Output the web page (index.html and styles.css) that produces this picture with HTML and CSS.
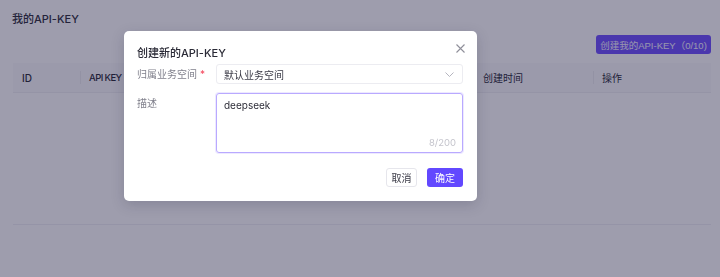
FILE: index.html
```html
<!DOCTYPE html>
<html lang="zh">
<head>
<meta charset="utf-8">
<link rel="stylesheet" href="styles.css">
</head>
<body>
<div class="page">
  <div class="page-title">我的API-KEY</div>
  <div class="toolbar">
    <button class="btn-create">创建我的API-KEY（0/10)</button>
  </div>
  <div class="table">
    <div class="thead">
      <div class="th c-id">ID</div>
      <div class="th c-key">API KEY</div>
      <div class="th c-name"></div>
      <div class="th c-space"></div>
      <div class="th c-time">创建时间</div>
      <div class="th c-op">操作</div>
    </div>
    <div class="tbody"></div>
  </div>
</div>

<div class="mask"></div>

<div class="modal">
  <div class="modal-head">
    <div class="modal-title">创建新的API-KEY</div>
    <svg class="close" width="9" height="9" viewBox="0 0 9 9"><path d="M0.5 0.5 L8.5 8.5 M8.5 0.5 L0.5 8.5" stroke="#8f8f9a" stroke-width="1.1" fill="none"/></svg>
  </div>
  <div class="form-row">
    <div class="label">归属业务空间<span class="req">*</span></div>
    <div class="select">
      <span>默认业务空间</span>
      <svg width="9" height="5" viewBox="0 0 9 5"><path d="M0.5 0.5 L4.5 4.5 L8.5 0.5" stroke="#b5b5bf" stroke-width="1" fill="none"/></svg>
    </div>
  </div>
  <div class="form-row">
    <div class="label label-top">描述</div>
    <div class="textarea">
      <span class="ta-text">deepseek</span>
      <span class="count">8/200</span>
    </div>
  </div>
  <div class="modal-foot">
    <button class="btn btn-cancel">取消</button>
    <button class="btn btn-ok">确定</button>
  </div>
</div>
</body>
</html>
```

FILE: styles.css
```css
* { box-sizing: border-box; }
html, body { margin: 0; padding: 0; }
body {
  width: 720px;
  height: 277px;
  overflow: hidden;
  background: #ffffff;
  font-family: "Inter", "Noto Sans CJK SC", sans-serif;
  font-size: 11px;
  color: #1f1f2b;
}
.page {
  padding: 12px 9px 0 13px;
  display: flex;
  flex-direction: column;
}
.page-title {
  font-size: 11px;
  font-weight: 500;
  line-height: 14px;
  margin-left: -1px;
  color: #2a2a36;
}
.toolbar {
  display: flex;
  justify-content: flex-end;
  margin-top: 9px;
}
.btn-create {
  height: 19px;
  width: 115px;
  border: none;
  border-radius: 3px;
  background: #6c4cff;
  color: #f4f2ff;
  font-family: "Liberation Sans", "Noto Sans CJK SC", sans-serif;
  font-size: 9.5px;
  padding: 0;
  white-space: nowrap;
  overflow: hidden;
}
.table {
  margin-top: 9px;
  height: 162px;
  border-bottom: 1px solid #f0f0f4;
}
.thead {
  display: flex;
  height: 30px;
  background: #fafafc;
  border-bottom: 1px solid #efeff3;
}
.th {
  display: flex;
  align-items: center;
  padding-left: 9px;
  font-size: 10px;
  font-weight: 500;
  color: #262633;
  position: relative;
  white-space: nowrap;
}
.th + .th::before {
  content: "";
  position: absolute;
  left: 0;
  top: 8px;
  bottom: 8px;
  width: 1px;
  background: #ebebf0;
}
.c-id { width: 67px; }
.c-key { width: 130px; font-size: 9.5px; letter-spacing: -0.6px; }
.c-name { width: 130px; }
.c-space { width: 134px; }
.c-time { width: 119px; font-weight: 400; }
.c-op { flex: 1; font-weight: 400; }

.mask {
  position: fixed;
  inset: 0;
  background: rgba(29, 28, 65, 0.43);
}
.modal {
  position: fixed;
  left: 124px;
  top: 31px;
  width: 353px;
  height: 170px;
  background: #ffffff;
  border-radius: 5px;
  box-shadow: 0 4px 14px rgba(20, 20, 50, 0.18);
  padding: 12px 14px 14px 13px;
  display: flex;
  flex-direction: column;
}
.modal-head {
  display: flex;
  justify-content: space-between;
  align-items: flex-start;
  height: 21px;
}
.modal-title {
  font-size: 11px;
  font-weight: 500;
  color: #2a2a36;
  line-height: 16px;
  margin-top: 2px;
}
.close { margin-top: 1px; margin-right: -2px; }
.form-row {
  display: flex;
  align-items: flex-start;
  margin-bottom: 9px;
}
.label {
  width: 79px;
  font-size: 10px;
  color: #80808c;
  line-height: 20px;
}
.label-top { line-height: 20px; }
.req { color: #f5455b; margin-left: 3px; }
.select {
  flex: 1;
  height: 20px;
  border: 1px solid #ececf1;
  border-radius: 3px;
  display: flex;
  align-items: center;
  justify-content: space-between;
  padding: 0 8px 0 7px;
  font-size: 10px;
  color: #3a3a46;
}
.textarea {
  flex: 1;
  height: 60px;
  border: 1px solid #b9a9ff;
  border-radius: 3px;
  box-shadow: 0 0 0 1px rgba(185, 169, 255, 0.25);
  position: relative;
  padding: 4px 7px;
  font-size: 10px;
  color: #2d2d38;
  line-height: 14px;
}
.count {
  position: absolute;
  right: 6px;
  bottom: 2px;
  color: #c4c4cc;
  font-size: 9.5px;
}
.modal-foot {
  margin-top: auto;
  display: flex;
  justify-content: flex-end;
  gap: 10px;
}
.btn {
  height: 19px;
  border-radius: 3px;
  font-family: inherit;
  font-size: 10px;
  padding: 0;
}
.btn-cancel {
  width: 31px;
  background: #ffffff;
  border: 1px solid #e6e6ec;
  color: #3a3a46;
}
.btn-ok {
  width: 36px;
  background: #6248ff;
  border: none;
  color: #ffffff;
}
```
